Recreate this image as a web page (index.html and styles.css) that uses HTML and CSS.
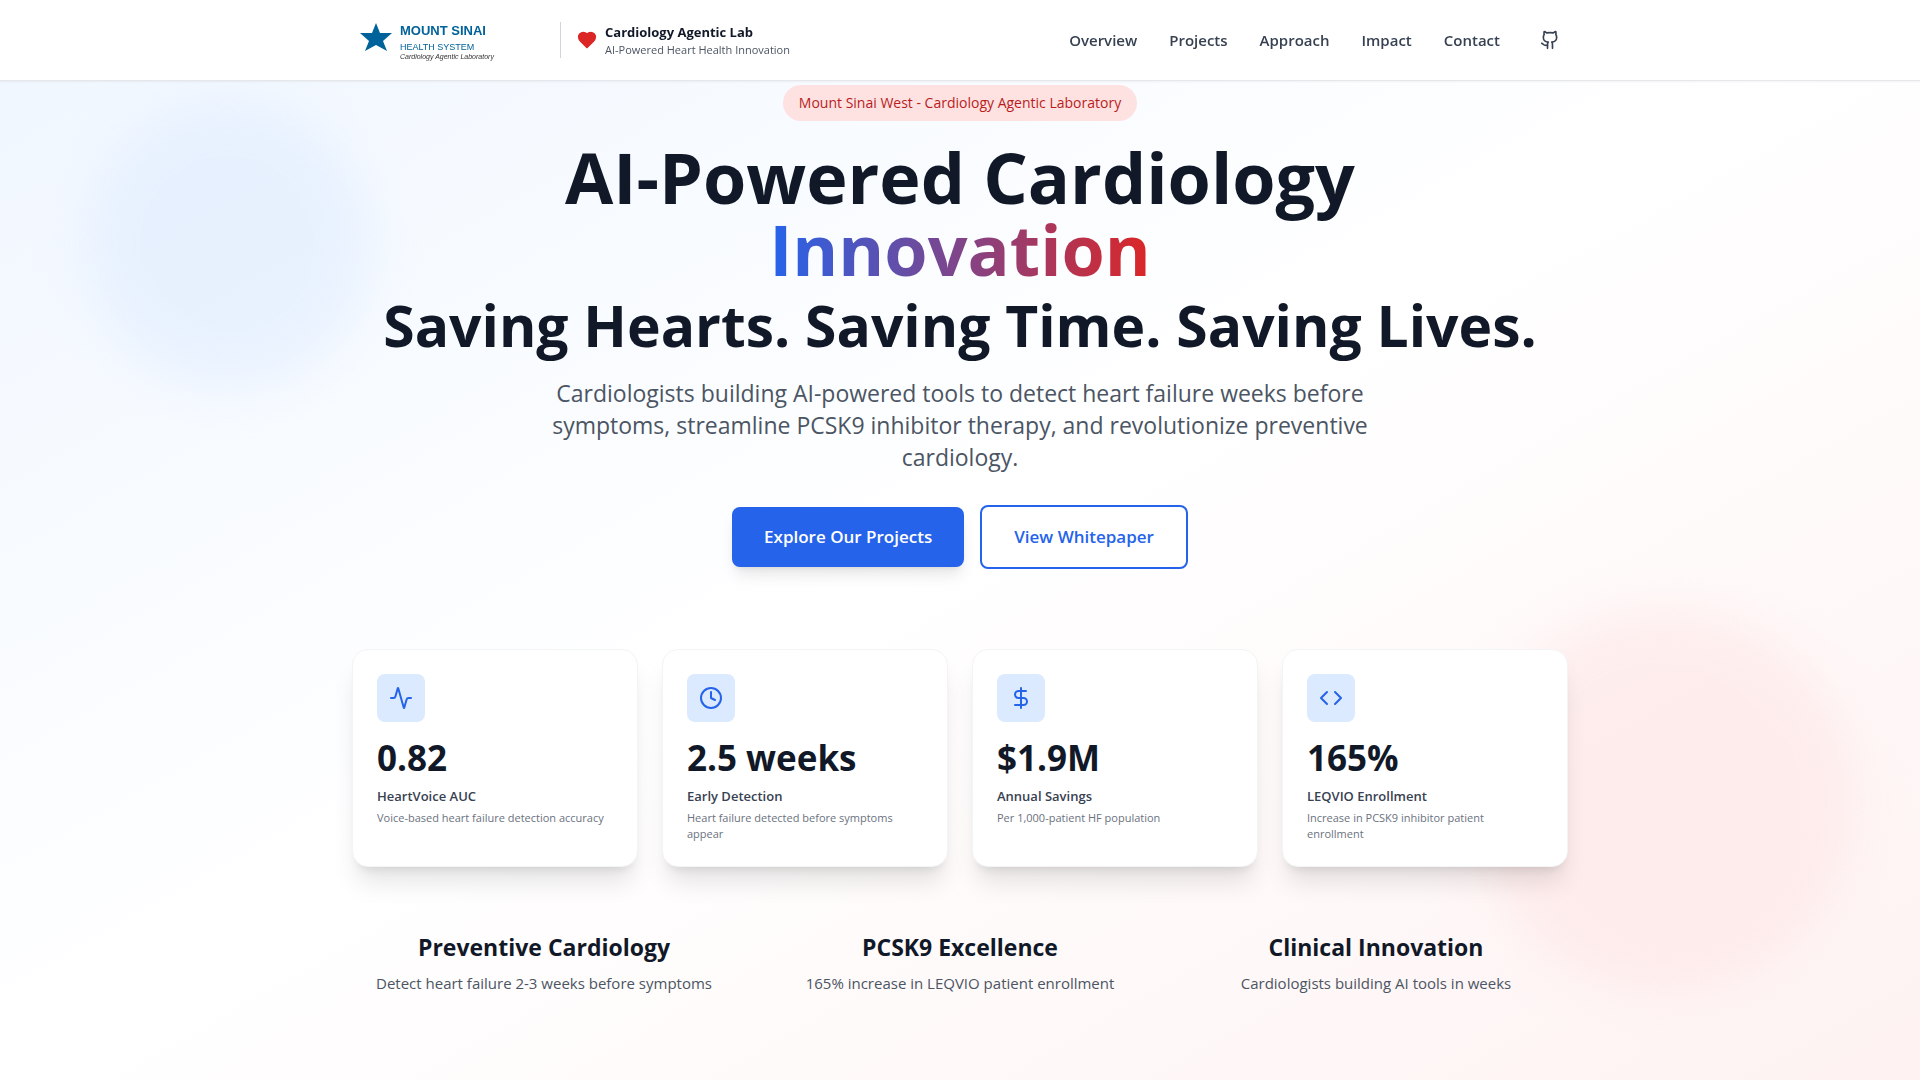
FILE: index.html
```html
<!DOCTYPE html>
<html lang="en">
<head>
<meta charset="utf-8">
<meta name="viewport" content="width=device-width, initial-scale=1">
<title>Cardiology Agentic Lab</title>
<link rel="stylesheet" href="styles.css">
</head>
<body>
<header class="site-header">
  <div class="container header-row">
    <div class="brand">
      <a class="logo-link" href="#home" aria-label="Mount Sinai Health System">
        <svg class="logo" width="192" height="48" viewBox="0 0 192 48">
          <path fill="#00629b" d="M24 7l4 10h12l-9 8 4 10-11-6-11 6 4-10-9-8h12z"/>
          <text class="logo-name" x="48" y="19">MOUNT SINAI</text>
          <text class="logo-system" x="48" y="34">HEALTH SYSTEM</text>
          <text class="logo-lab" x="48" y="43">Cardiology Agentic Laboratory</text>
        </svg>
      </a>
      <div class="lab">
        <svg class="heart" width="20" height="20" viewBox="0 0 24 24" fill="currentColor" stroke="currentColor" stroke-width="2" stroke-linecap="round" stroke-linejoin="round"><path d="M19 14c1.49-1.46 3-3.21 3-5.5A5.5 5.5 0 0 0 16.500 3c-1.760 0-3 .5-4.500 2-1.500-1.500-2.740-2-4.500-2A5.500 5.500 0 0 0 2 8.500c0 2.300 1.500 4.050 3 5.500l7 7Z"/></svg>
        <div>
          <div class="lab-title">Cardiology Agentic Lab</div>
          <div class="lab-subtitle">AI-Powered Heart Health Innovation</div>
        </div>
      </div>
    </div>
    <nav class="nav">
      <a href="#overview">Overview</a>
      <a href="#projects">Projects</a>
      <a href="#approach">Approach</a>
      <a href="#impact">Impact</a>
      <a href="#contact">Contact</a>
      <a class="nav-icon" href="#github" aria-label="GitHub">
        <svg width="20" height="20" viewBox="0 0 24 24" class="line-icon"><path d="M15 22v-4a4.800 4.800 0 0 0-1-3.500c3 0 6-2 6-5.500.08-1.250-.27-2.480-1-3.500.28-1.150.28-2.350 0-3.500 0 0-1 0-3 1.500-2.640-.5-5.360-.5-8 0C6 2 5 2 5 2c-.3 1.150-.3 2.350 0 3.500A5.403 5.403 0 0 0 4 9c0 3.500 3 5.500 6 5.500-.39.49-.68 1.050-.85 1.650-.17.6-.22 1.230-.15 1.850v4"/><path d="M9 18c-4.510 2-5-2-7-2"/></svg>
      </a>
    </nav>
  </div>
</header>

<main class="hero" id="home">
  <div class="glow glow-blue"></div>
  <div class="glow glow-red"></div>
  <div class="container hero-content">
    <div class="intro">
      <span class="badge">Mount Sinai West - Cardiology Agentic Laboratory</span>
      <h1 class="headline">
        <span class="headline-line">AI-Powered Cardiology</span>
        <span class="headline-line"><span class="gradient-text">Innovation</span></span>
        <span class="tagline">Saving Hearts. Saving Time. Saving Lives.</span>
      </h1>
      <p class="lead">Cardiologists building AI-powered tools to detect heart failure weeks before symptoms, streamline PCSK9 inhibitor therapy, and revolutionize preventive cardiology.</p>
      <div class="actions">
        <a class="button button-primary" href="#projects">Explore Our Projects</a>
        <a class="button button-outline" href="#whitepaper">View Whitepaper</a>
      </div>
    </div>

    <div class="stats">
      <div class="card">
        <div class="card-icon"><svg width="24" height="24" viewBox="0 0 24 24" class="line-icon"><path d="M22 12h-2.480a2 2 0 0 0-1.930 1.460l-2.350 8.360a.25.25 0 0 1-.48 0L9.240 2.180a.25.25 0 0 0-.48 0l-2.350 8.360A2 2 0 0 1 4.490 12H2"/></svg></div>
        <div class="card-value">0.82</div>
        <div class="card-label">HeartVoice AUC</div>
        <div class="card-text">Voice-based heart failure detection accuracy</div>
      </div>
      <div class="card">
        <div class="card-icon"><svg width="24" height="24" viewBox="0 0 24 24" class="line-icon"><circle cx="12" cy="12" r="10"/><path d="M12 6v6l4 2"/></svg></div>
        <div class="card-value">2.5 weeks</div>
        <div class="card-label">Early Detection</div>
        <div class="card-text">Heart failure detected before symptoms appear</div>
      </div>
      <div class="card">
        <div class="card-icon"><svg width="24" height="24" viewBox="0 0 24 24" class="line-icon"><path d="M12 2v20M17 5H9.500a3.500 3.500 0 0 0 0 7h5a3.500 3.500 0 0 1 0 7H6"/></svg></div>
        <div class="card-value">$1.9M</div>
        <div class="card-label">Annual Savings</div>
        <div class="card-text">Per 1,000-patient HF population</div>
      </div>
      <div class="card">
        <div class="card-icon"><svg width="24" height="24" viewBox="0 0 24 24" class="line-icon"><path d="m16 18 6-6-6-6M8 6l-6 6 6 6"/></svg></div>
        <div class="card-value">165%</div>
        <div class="card-label">LEQVIO Enrollment</div>
        <div class="card-text">Increase in PCSK9 inhibitor patient enrollment</div>
      </div>
    </div>

    <div class="pillars">
      <div>
        <h2>Preventive Cardiology</h2>
        <p>Detect heart failure 2-3 weeks before symptoms</p>
      </div>
      <div>
        <h2>PCSK9 Excellence</h2>
        <p>165% increase in LEQVIO patient enrollment</p>
      </div>
      <div>
        <h2>Clinical Innovation</h2>
        <p>Cardiologists building AI tools in weeks</p>
      </div>
    </div>
  </div>
</main>
</body>
</html>
```
FILE: styles.css
```css
*, *::before, *::after { box-sizing: border-box; }

body {
  margin: 0;
  font-family: "Open Sans", "Noto Sans", sans-serif;
  font-size: 15px;
  line-height: 24px;
  color: #111827;
  background: #fff;
}

h1, h2, p { margin: 0; }
a { color: inherit; text-decoration: none; }
svg { display: block; }

.container {
  width: 100%;
  max-width: 1280px;
  margin: 0 auto;
  padding: 0 32px;
}

.line-icon {
  fill: none;
  stroke: currentColor;
  stroke-width: 2;
  stroke-linecap: round;
  stroke-linejoin: round;
}

/* Header */
.site-header {
  position: fixed;
  top: 0;
  left: 0;
  right: 0;
  z-index: 10;
  background: #fff;
  border-bottom: 1px solid #e5e7eb;
  box-shadow: 0 1px 2px rgba(0, 0, 0, .05);
}
.header-row {
  display: flex;
  align-items: center;
  justify-content: space-between;
  min-height: 80px;
}
.brand { display: flex; align-items: center; gap: 16px; }
.logo-name { font: bold 13px "Liberation Sans", Arial, sans-serif; fill: #00629b; }
.logo-system { font: 9px "Liberation Sans", Arial, sans-serif; fill: #00629b; }
.logo-lab { font: italic 7px "Liberation Sans", Arial, sans-serif; fill: #333; }
.lab {
  display: flex;
  align-items: center;
  gap: 8px;
  padding-left: 16px;
  border-left: 1px solid #d1d5db;
}
.heart { color: #dc2626; }
.lab-title { font-size: 13px; font-weight: 700; line-height: 20px; }
.lab-subtitle { font-size: 11px; line-height: 16px; color: #4b5563; }
.nav {
  display: flex;
  align-items: center;
  gap: 32px;
  font-size: 15px;
  font-weight: 600;
  color: #374151;
}
.nav-icon { padding: 8px; }

/* Hero */
.hero {
  position: relative;
  display: flex;
  align-items: center;
  min-height: 100vh;
  padding: 80px 0;
  overflow: hidden;
  background: linear-gradient(to bottom right, #eff6ff, #fff, #fef2f2);
}
.glow { position: absolute; border-radius: 50%; opacity: .5; filter: blur(24px); }
.glow-blue { top: 100px; left: 84px; width: 288px; height: 288px; background: #dbeafe; }
.glow-red { right: 64px; bottom: 88px; width: 384px; height: 384px; background: #fee2e2; }
.hero-content { position: relative; }

.intro {
  display: flex;
  flex-direction: column;
  align-items: center;
  text-align: center;
  margin-bottom: 80px;
}
.badge {
  padding: 8px 16px;
  margin-bottom: 20px;
  border-radius: 18px;
  background: #fee2e2;
  color: #b91c1c;
  font-size: 14px;
  font-weight: 500;
  line-height: 20px;
}
.headline { margin-bottom: 12px; font-size: 70px; font-weight: 700; line-height: 72px; }
.headline-line, .tagline { display: block; }
.gradient-text {
  background: linear-gradient(to right, #2563eb, #dc2626);
  -webkit-background-clip: text;
  background-clip: text;
  color: transparent;
}
.tagline { font-size: 57px; line-height: 80px; }
.lead {
  max-width: 896px;
  margin-bottom: 32px;
  font-size: 23px;
  line-height: 32px;
  color: #4b5563;
}
.actions { display: flex; align-items: center; gap: 16px; }
.button {
  padding: 16px 32px;
  border-radius: 8px;
  font-size: 17px;
  font-weight: 600;
  line-height: 28px;
}
.button-primary {
  background: #2563eb;
  color: #fff;
  box-shadow: 0 10px 15px -3px rgba(0, 0, 0, .1), 0 4px 6px -4px rgba(0, 0, 0, .1);
}
.button-outline { border: 2px solid #2563eb; background: #fff; color: #2563eb; }

/* Statistics */
.stats {
  display: grid;
  grid-template-columns: repeat(4, 1fr);
  gap: 24px;
  margin-bottom: 64px;
}
.card {
  padding: 24px;
  border: 1px solid #f3f4f6;
  border-radius: 16px;
  background: #fff;
  box-shadow: 0 20px 25px -5px rgba(0, 0, 0, .1), 0 8px 10px -6px rgba(0, 0, 0, .1);
}
.card-icon {
  display: flex;
  align-items: center;
  justify-content: center;
  width: 48px;
  height: 48px;
  margin-bottom: 16px;
  border-radius: 8px;
  background: #dbeafe;
  color: #2563eb;
}
.card-value { margin-bottom: 8px; font-size: 35px; font-weight: 700; line-height: 40px; }
.card-label { margin-bottom: 4px; font-size: 13px; font-weight: 600; line-height: 20px; color: #374151; }
.card-text { font-size: 11px; line-height: 16px; color: #6b7280; }

/* Focus areas */
.pillars {
  display: grid;
  grid-template-columns: repeat(3, 1fr);
  gap: 32px;
  text-align: center;
}
.pillars h2 { margin-bottom: 8px; font-size: 23px; font-weight: 700; line-height: 32px; }
.pillars p { color: #4b5563; }

@media (max-width: 900px) {
  .header-row, .nav { flex-wrap: wrap; }
  .stats { grid-template-columns: repeat(2, 1fr); }
  .pillars { grid-template-columns: 1fr; }
}
```
